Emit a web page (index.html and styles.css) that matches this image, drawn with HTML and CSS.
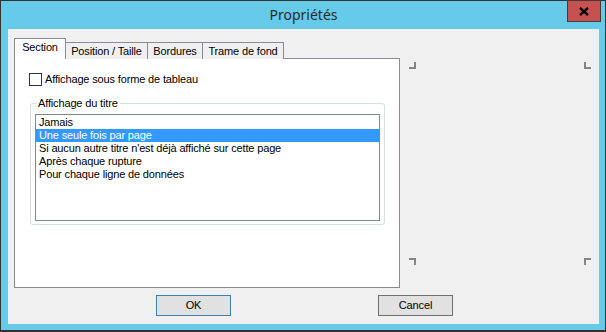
FILE: index.html
```html
<!DOCTYPE html>
<html lang="fr">
<head>
<meta charset="utf-8">
<title>Propriétés</title>
<link rel="stylesheet" href="styles.css">
</head>
<body>
<div class="window">
  <div class="titlebar">
    <div></div>
    <div class="title">Propriétés</div>
    <button class="close" aria-label="Fermer">
      <svg width="10" height="9" viewBox="0 0 10 9"><path d="M1 0.8 L9 8.2 M9 0.8 L1 8.2" stroke="#000" stroke-width="2.3" fill="none"/></svg>
    </button>
  </div>
  <div class="client">
    <div class="main">
      <div class="tabs-col">
        <div class="tabs">
          <div class="tab active t1">Section</div>
          <div class="tab t2">Position / Taille</div>
          <div class="tab t3">Bordures</div>
          <div class="tab t4">Trame de fond</div>
        </div>
        <div class="panel">
          <label class="check"><span class="box"></span><span>Affichage sous forme de tableau</span></label>
          <fieldset class="group">
            <legend>Affichage du titre</legend>
            <ul class="list">
              <li>Jamais</li>
              <li class="sel">Une seule fois par page</li>
              <li>Si aucun autre titre n'est déjà affiché sur cette page</li>
              <li>Après chaque rupture</li>
              <li>Pour chaque ligne de données</li>
            </ul>
          </fieldset>
        </div>
      </div>
      <div class="preview">
        <div class="mrow"><span class="mark tl"></span><span class="mark tr"></span></div>
        <div class="mrow"><span class="mark bl"></span><span class="mark br"></span></div>
      </div>
    </div>
    <div class="buttons">
      <button class="btn default">OK</button>
      <button class="btn">Cancel</button>
    </div>
  </div>
</div>
</body>
</html>
```
FILE: styles.css
```css
html, body {
  margin: 0;
  padding: 0;
  overflow: hidden;
  background: #ffffff;
}

.window {
  width: 606px;
  height: 332px;
  box-sizing: border-box;
  border: 1px solid #333333;
  border-bottom-width: 2px;
  background: #65cbe9;
  padding: 0 6px 6px 7px;
  font-family: "Liberation Sans", Arial, sans-serif;
  font-size: 11px;
  letter-spacing: -0.15px;
  color: #000;
}

.titlebar {
  height: 28px;
  display: grid;
  grid-template-columns: 1fr auto 1fr;
}

.title {
  font-family: "Noto Sans", sans-serif;
  font-size: 14px;
  letter-spacing: 0;
  line-height: 28px;
  color: #2a2a2a;
}

.close {
  justify-self: end;
  align-self: start;
  width: 34px;
  height: 22px;
  margin: -1px -2px 0 0;
  padding: 0;
  box-sizing: border-box;
  border: 1px solid #443a3a;
  background: #c75050;
  display: flex;
  align-items: center;
  justify-content: center;
}

.client {
  height: 295px;
  box-sizing: border-box;
  background: #f0f0f0;
  padding: 9px 0 0 6px;
}

.main {
  display: flex;
  align-items: flex-start;
}

.tabs-col {
  width: 386px;
}

.tabs {
  display: flex;
  align-items: flex-end;
  height: 21px;
  margin-bottom: -1px;
}

.tab {
  box-sizing: border-box;
  height: 17px;
  border: 1px solid #898c95;
  border-bottom: none;
  background: #f0f0f0;
  padding-top: 2px;
  line-height: 13px;
  text-align: center;
  white-space: nowrap;
  margin-left: -1px;
}

.tab.active {
  height: 21px;
  background: #ffffff;
  position: relative;
  z-index: 1;
  margin-left: 0;
}

.t1 { width: 52px; }
.t2 { width: 83px; }
.t3 { width: 56px; }
.t4 { width: 82px; }

.panel {
  box-sizing: border-box;
  height: 230px;
  background: #ffffff;
  border: 1px solid #898c95;
  padding: 14px 0 0 14px;
}

.check {
  display: flex;
  align-items: center;
  height: 13px;
  line-height: 13px;
}

.box {
  width: 13px;
  height: 13px;
  box-sizing: border-box;
  border: 1px solid #333333;
  background: #fff;
  margin-right: 3px;
}

.group {
  margin: 11px 0 0 1px;
  width: 355px;
  min-width: 0;
  box-sizing: border-box;
  border: 1px solid #d5dfe5;
  border-radius: 3px;
  padding: 4px 4px 3px 4px;
}

.group legend {
  padding: 0 2px;
  margin-left: 1px;
  line-height: 13px;
  height: 13px;
}

.list {
  list-style: none;
  margin: 0;
  width: 345px;
  height: 107px;
  box-sizing: border-box;
  border: 1px solid #828790;
  background: #fff;
  padding: 1px 0 0 0;
}

.list li {
  height: 13px;
  line-height: 13px;
  padding-left: 3px;
  white-space: nowrap;
}

.list li.sel {
  background: #3399ff;
  color: #ffffff;
}

.preview {
  width: 182px;
  height: 203px;
  margin: 24px 0 0 9px;
  display: flex;
  flex-direction: column;
  justify-content: space-between;
}

.mrow {
  display: flex;
  justify-content: space-between;
}

.mark {
  width: 7px;
  height: 7px;
  box-sizing: border-box;
  border: 0 solid #858585;
}

.mark.tl { border-right-width: 2px; border-bottom-width: 2px; }
.mark.tr { border-left-width: 2px; border-bottom-width: 2px; }
.mark.bl { border-right-width: 2px; border-top-width: 2px; }
.mark.br { border-left-width: 2px; border-top-width: 2px; }

.buttons {
  display: flex;
  margin-top: 7px;
  padding-left: 142px;
  gap: 147px;
}

.btn {
  width: 75px;
  height: 21px;
  box-sizing: border-box;
  border: 1px solid #707070;
  background: #e1e1e1;
  font-family: "Liberation Sans", Arial, sans-serif;
  font-size: 11px;
  letter-spacing: -0.15px;
  line-height: 19px;
  padding: 0;
  color: #000;
}

.btn.default {
  border-color: #3c7fb1;
}
```
